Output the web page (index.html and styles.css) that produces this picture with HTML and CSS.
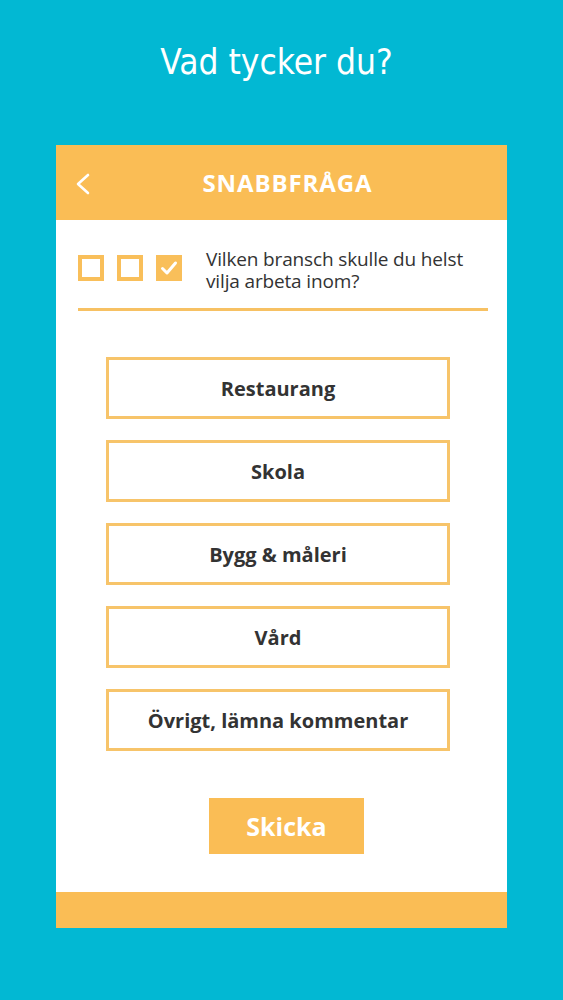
FILE: index.html
```html
<!DOCTYPE html>
<html lang="sv">
<head>
<meta charset="utf-8">
<title>Vad tycker du?</title>
<link rel="stylesheet" href="styles.css">
</head>
<body>
<h1 class="title">Vad tycker du?</h1>
<div class="card">
	<div class="card-head">
		<span class="back">
			<svg width="18" height="22" viewBox="0 0 18 22"><path d="M14 2 L4 11 L14 20" fill="none" stroke="#fff" stroke-width="2.6" stroke-linecap="round" stroke-linejoin="round"/></svg>
		</span>
		<span class="head-title">SNABBFRÅGA</span>
		<span></span>
	</div>
	<div class="card-body">
		<div class="question">
			<div class="steps">
				<span class="box"></span>
				<span class="box"></span>
				<span class="box done">
					<svg width="20" height="20" viewBox="0 0 20 20"><path d="M3.5 10.5 L8 15 L16.5 5" fill="none" stroke="#fff" stroke-width="3" stroke-linecap="round" stroke-linejoin="round"/></svg>
				</span>
			</div>
			<p class="q-text">Vilken bransch skulle du helst vilja arbeta inom?</p>
		</div>
		<div class="divider"></div>
		<ul class="options">
			<li>Restaurang</li>
			<li>Skola</li>
			<li>Bygg &amp; måleri</li>
			<li>Vård</li>
			<li>Övrigt, lämna kommentar</li>
		</ul>
		<div class="send-row">
			<button class="send">Skicka</button>
		</div>
	</div>
	<div class="card-foot"></div>
</div>
</body>
</html>
```
FILE: styles.css
```css
body,h1,p,ul,li{margin:0;padding:0;}
ul{list-style-type:none;}
body{background:#02b8d3;font-family:"Open Sans","Noto Sans",sans-serif;color:#333;}

.title{font:normal 35px/40px "DejaVu Sans Condensed","DejaVu Sans",sans-serif;color:#fff;text-align:center;padding-top:42px;height:103px;box-sizing:border-box;margin-left:-10px;}

.card{width:451px;margin:42px auto 0;background:#fff;}
.card-head{height:75px;background:#fabd55;display:grid;grid-template-columns:1fr auto 1fr;align-items:center;}
.card-head .back{padding-left:18px;display:flex;align-items:center;padding-top:2px;}
.head-title{color:#fff;font-weight:700;font-size:24px;letter-spacing:0.9px;margin-left:6px;margin-right:-6px;}

.card-body{padding:28px 19px 38px 22px;}
.question{display:flex;align-items:flex-start;gap:24px;}
.steps{display:flex;gap:13px;margin-top:7px;}
.box{width:26px;height:26px;box-sizing:border-box;border:4px solid #f9bf5a;display:flex;align-items:center;justify-content:center;}
.box.done{background:#f9bf5a;border:none;}
.q-text{font-size:19px;line-height:22px;letter-spacing:-0.15px;color:#333;width:270px;}

.divider{height:3px;background:#f7c163;margin-top:16px;}

.options{padding:46px 0 0 28px;}
.options li{width:344px;height:62px;box-sizing:border-box;border:3px solid #f7c46a;display:flex;align-items:center;justify-content:center;font-size:20px;font-weight:700;color:#333;margin-bottom:21px;}
.options li:last-child{margin-bottom:0;}

.send-row{display:flex;justify-content:center;padding-top:47px;padding-left:7px;}
.send{width:155px;height:56px;border:none;background:#fabd55;color:#fff;font-family:"Open Sans",sans-serif;font-weight:700;font-size:25px;padding:0;}

.card-foot{height:36px;background:#fabd55;}
```
